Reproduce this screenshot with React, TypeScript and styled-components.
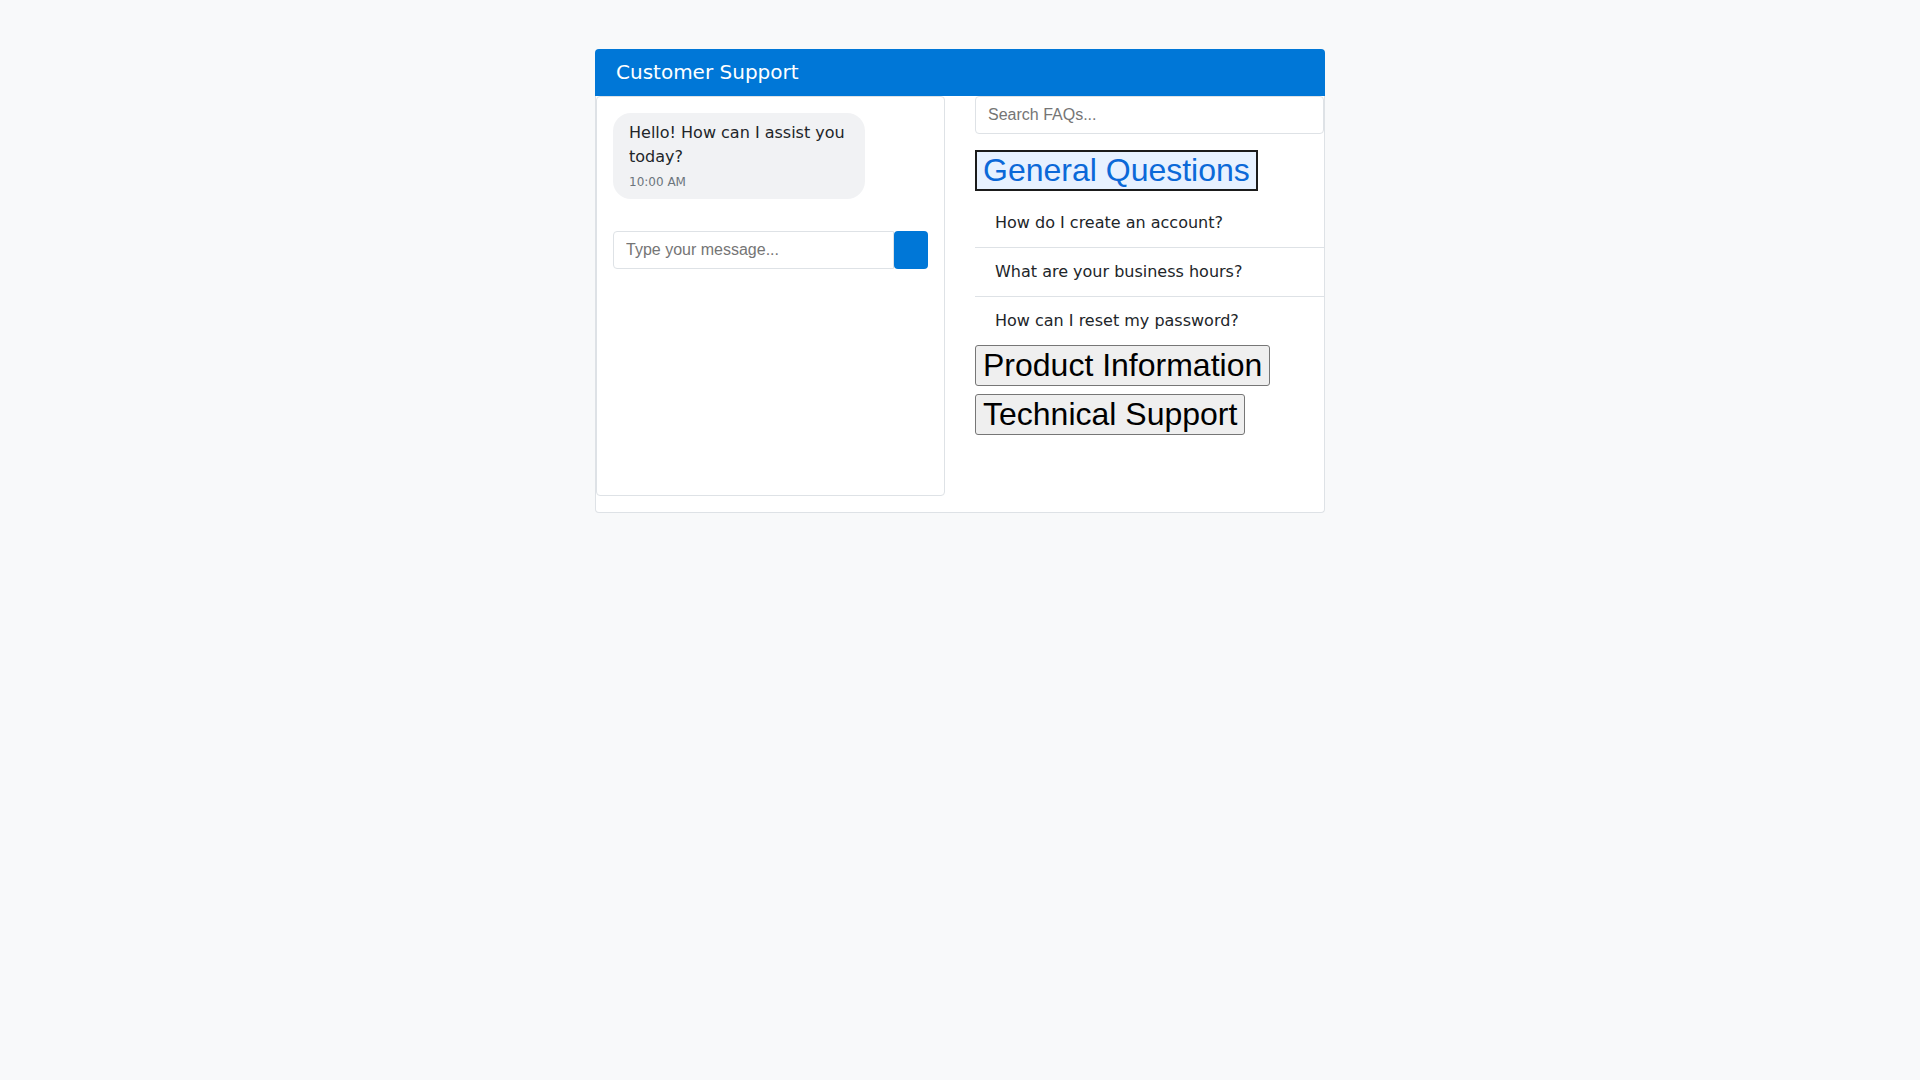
import React from "react";
import styled, { createGlobalStyle } from "styled-components";

const GlobalStyle = createGlobalStyle`
  html, body {
    margin: 0;
    padding: 0;
    background: #f8f9fa;
    font-family: "DejaVu Sans", sans-serif;
    color: #212529;
  }
  * { box-sizing: border-box; }
`;

const Page = styled.div`
  display: flex;
  justify-content: center;
  padding-top: 49px;
`;

const Card = styled.div`
  width: 730px;
  display: flex;
  flex-direction: column;
`;

const Header = styled.div`
  height: 47px;
  display: flex;
  align-items: center;
  padding: 0 21px 2px 21px;
  background: #0077d7;
  color: #ffffff;
  font-size: 20px;
  line-height: 30px;
  border-radius: 4px 4px 0 0;
`;

const Body = styled.div`
  display: grid;
  grid-template-columns: 1fr 1fr;
  column-gap: 30px;
  padding-bottom: 16px;
  background: #ffffff;
  border: 1px solid #dee2e6;
  border-top: none;
  border-radius: 0 0 4px 4px;
`;

const ChatPanel = styled.div`
  height: 400px;
  border: 1px solid #dee2e6;
  border-radius: 4px;
  padding: 16px;
  display: flex;
  flex-direction: column;
`;

const Messages = styled.div`
  display: flex;
  flex-direction: column;
  margin-bottom: 16px;
`;

const Bubble = styled.div`
  max-width: 80%;
  align-self: flex-start;
  background: #f1f2f4;
  border-radius: 18px;
  padding: 8px 16px;
  margin-bottom: 16px;
  font-size: 16px;
  line-height: 24px;
`;

const Time = styled.div`
  margin-top: 4px;
  font-size: 12px;
  line-height: 18px;
  color: #6c757d;
`;

const InputRow = styled.div`
  display: flex;
`;

const MessageInput = styled.input`
  flex: 1;
  min-width: 0;
  height: 38px;
  padding: 0 12px;
  border: 1px solid #dee2e6;
  border-radius: 4px 0 0 4px;
  font-family: "Liberation Sans", Arial, sans-serif;
  font-size: 16px;
  color: #212529;
  outline: none;
  &::placeholder { color: #757575; }
`;

const SendButton = styled.button`
  width: 34px;
  height: 38px;
  border: none;
  border-radius: 4px;
  background: #0077d7;
  padding: 0;
`;

const FaqPanel = styled.div`
  display: flex;
  flex-direction: column;
  align-items: flex-start;
`;

const SearchInput = styled.input`
  width: 100%;
  height: 38px;
  padding: 0 12px;
  border: 1px solid #dee2e6;
  border-radius: 4px;
  font-family: "Liberation Sans", Arial, sans-serif;
  font-size: 16px;
  margin-bottom: 16px;
  outline: none;
  &::placeholder { color: #757575; }
`;

const CategoryButton = styled.button<{ $active?: boolean }>`
  font-family: "Liberation Sans", Arial, sans-serif;
  font-size: 32px;
  line-height: 37px;
  margin: 0 0 8px;
  cursor: pointer;
  border-radius: ${(p) => (p.$active ? "0" : "3px")};
  border: ${(p) => (p.$active ? "2px solid #1b1b1b" : "1px solid #767676")};
  padding: ${(p) => (p.$active ? "0 6px" : "1px 7px")};
  background: ${(p) => (p.$active ? "#e7f1ff" : "#efefef")};
  color: ${(p) => (p.$active ? "#0b69d8" : "#000000")};
`;

const FaqList = styled.div`
  width: 100%;
  display: flex;
  flex-direction: column;
`;

const FaqItem = styled.div`
  padding: 12px 20px;
  font-size: 16px;
  line-height: 24px;
  color: #212529;
  border-bottom: 1px solid #dee2e6;
  &:last-child { border-bottom: none; }
`;

const faqs = [
  "How do I create an account?",
  "What are your business hours?",
  "How can I reset my password?",
];

export default function App() {
  return (
    <>
      <GlobalStyle />
      <Page>
        <Card>
          <Header>Customer Support</Header>
          <Body>
            <ChatPanel>
              <Messages>
                <Bubble>
                  Hello! How can I assist you today?
                  <Time>10:00 AM</Time>
                </Bubble>
              </Messages>
              <InputRow>
                <MessageInput placeholder="Type your message..." />
                <SendButton aria-label="Send" />
              </InputRow>
            </ChatPanel>
            <FaqPanel>
              <SearchInput placeholder="Search FAQs..." />
              <CategoryButton $active>General Questions</CategoryButton>
              <FaqList>
                {faqs.map((q) => (
                  <FaqItem key={q}>{q}</FaqItem>
                ))}
              </FaqList>
              <CategoryButton>Product Information</CategoryButton>
              <CategoryButton>Technical Support</CategoryButton>
            </FaqPanel>
          </Body>
        </Card>
      </Page>
    </>
  );
}
